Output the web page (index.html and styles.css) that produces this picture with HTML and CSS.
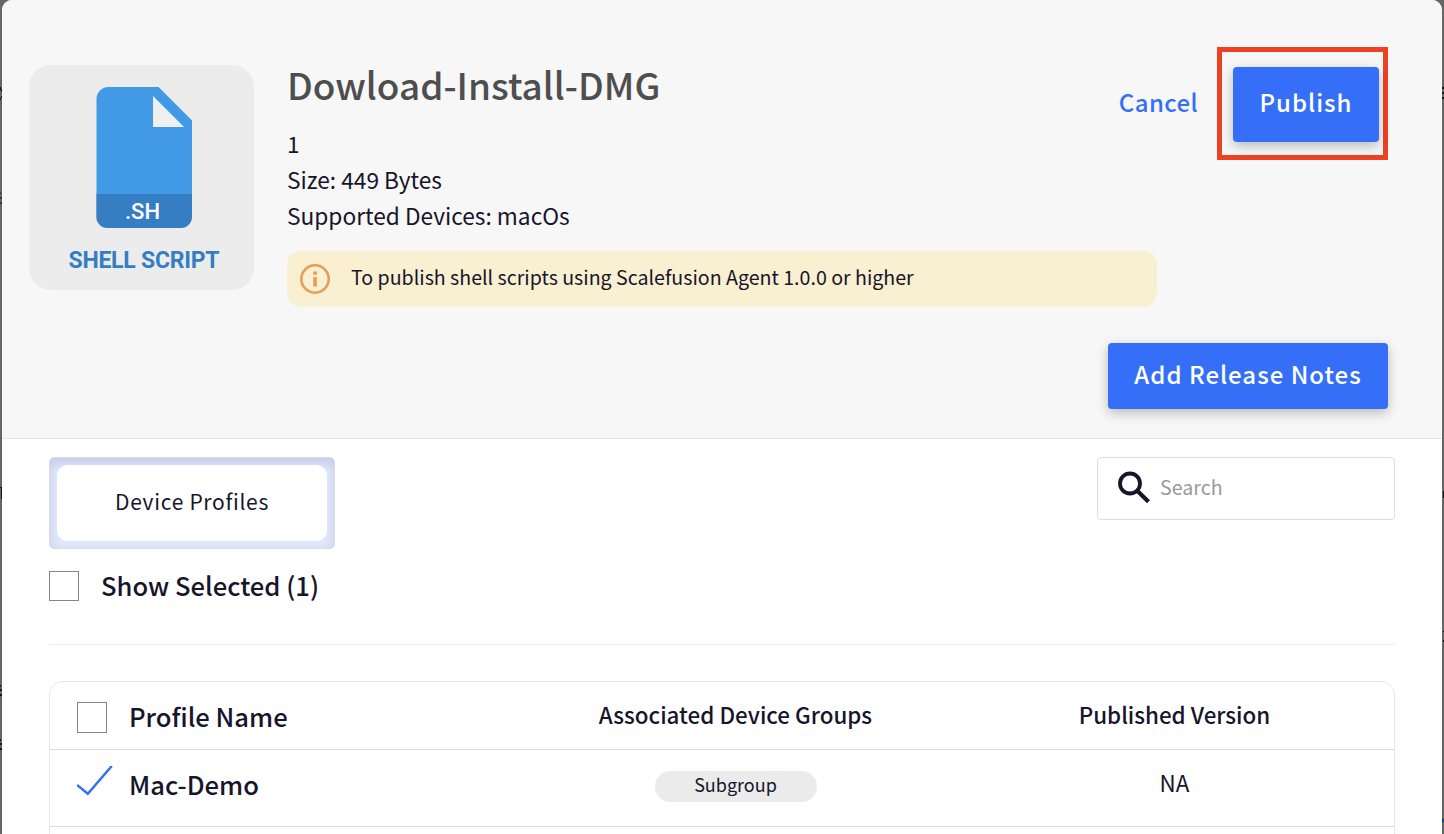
FILE: index.html
```
<!DOCTYPE html>
<html lang="en">
<head>
    <meta charset="UTF-8">
    <meta name="viewport" content="width=device-width, initial-scale=1.0">
    <title>Publish Script</title>
    <link rel="stylesheet" href="styles.css">
</head>
<body>
    <!-- slivers of the dimmed page behind the modal -->
    <svg class="edge" width="2" height="834" viewBox="0 0 2 834">
        <path d="M0 87h1v2h1v3h-1v-2h-1zM0 98h1v-2h1v2h-1v2h-1zM0 487h2v1h-2zM1 488h1v11h-1zM0 685h1v2h-1zM0 689h2v2h-2zM0 694h2v2h-2zM0 739h1v2h-1zM0 743h2v2h-2zM0 748h2v2h-2z" fill="#17152b"/>
        <path d="M0 192h1v2h-1zM0 197h2v2h-2zM0 202h2v2h-2z" fill="#3a3a3a"/>
    </svg>
    <div class="modal">
        <div class="modal-header">
            <div class="script-icon">
                <svg width="225" height="225" viewBox="0 0 225 225">
                    <path d="M79 22H129.500L163 55.500V129H67.500V34A12 12 0 0 1 79 22Z" fill="#4299e5"/>
                    <path d="M124 31V62H155Z" fill="#f0f0f0"/>
                    <path d="M67.300 129H163V152A11 11 0 0 1 152 163H78.300A11 11 0 0 1 67.300 152Z" fill="#357ec3"/>
                    <text class="icon-ext" x="113.500" y="154" text-anchor="middle" textLength="35">.SH</text>
                    <text class="icon-name" x="115" y="202.500" text-anchor="middle" textLength="151">SHELL SCRIPT</text>
                </svg>
            </div>
            <div class="details">
                <h1>Dowload-Install-DMG</h1>
                <p>1</p>
                <p>Size: 449 Bytes</p>
                <p>Supported Devices: macOs</p>
                <div class="notice">
                    <svg width="32" height="32" viewBox="0 0 32 32">
                        <circle cx="16" cy="16" r="13.700" fill="none" stroke="#e59d58" stroke-width="2.600"/>
                        <path d="M14.300 8.500h3.600v3.200h-3.600zM14.300 14h3.600v9.500h-3.600z" fill="#e59d58"/>
                    </svg>
                    <span>To publish shell scripts using Scalefusion Agent 1.0.0 or higher</span>
                </div>
            </div>
            <div class="actions">
                <div class="action-row">
                    <a href="#" class="cancel">Cancel</a>
                    <div class="highlight">
                        <button class="btn btn-publish">Publish</button>
                    </div>
                </div>
                <button class="btn btn-notes">Add Release Notes</button>
            </div>
        </div>
        <div class="modal-body">
            <div class="toolbar">
                <div class="tabs">
                    <div class="tab">Device Profiles</div>
                </div>
                <div class="search">
                    <svg width="34" height="34" viewBox="0 0 34 34">
                        <circle cx="13" cy="13.500" r="10" fill="none" stroke="#17152b" stroke-width="3.800"/>
                        <path d="M20.500 21L31.500 31.800" stroke="#17152b" stroke-width="4.200"/>
                    </svg>
                    <input type="text" placeholder="Search">
                </div>
            </div>
            <label class="show-selected">
                <span class="checkbox"></span>
                <span>Show Selected (1)</span>
            </label>
            <div class="profiles">
                <div class="row row-head">
                    <div class="cell name"><span class="checkbox"></span><span class="label">Profile Name</span></div>
                    <div class="cell">Associated Device Groups</div>
                    <div class="cell version">Published Version</div>
                </div>
                <div class="row">
                    <div class="cell name">
                        <svg class="tick" width="38" height="32" viewBox="0 0 38 32">
                            <path d="M0 19L10.800 27.800L34.800 0" fill="none" stroke="#356ff8" stroke-width="2.500"/>
                        </svg>
                        <span class="label">Mac-Demo</span>
                    </div>
                    <div class="cell"><span class="pill">Subgroup</span></div>
                    <div class="cell na">NA</div>
                </div>
                <div class="row"></div>
            </div>
        </div>
    </div>
    <svg class="edge" width="2" height="834" viewBox="0 0 2 834">
        <path d="M0 87h2v2h-2zM0 92h2v2h-2zM0 97h2v2h-2zM1 491h1v7h-1zM1 631h1v1h-1zM1 640h1v2h-1z" fill="#111111"/>
        <path d="M0 818h1v1h1v3h-1v1h-1z" fill="#1c3f9c"/>
    </svg>
</body>
</html>
```

FILE: styles.css
```
* {
    box-sizing: border-box;
}
body {
    display: flex;
    margin: 0;
    height: 834px;
    overflow: hidden;
    background: #666666;
    color: #17152b;
    font-family: "Noto Sans CJK SC", "Noto Sans", sans-serif;
}
.edge {
    flex: none;
}
.modal {
    width: 1440px;
    height: 834px;
    overflow: hidden;
    background: #ffffff;
    border-radius: 10px 10px 0 0;
}
.modal-header {
    display: flex;
    height: 439px;
    padding: 47px 54px 0 27px;
    background: #f7f7f7;
    border-bottom: 1px solid #e4e4e4;
}
.script-icon {
    width: 225px;
    height: 225px;
    margin-top: 18px;
    border-radius: 22px;
    background: #ececec;
}
.script-icon svg {
    display: block;
}
.icon-ext {
    font-family: Roboto, sans-serif;
    font-size: 22px;
    font-weight: 500;
    fill: #ffffff;
}
.icon-name {
    font-family: Roboto, sans-serif;
    font-size: 23px;
    font-weight: 700;
    fill: #357ec3;
}
.details {
    width: 870px;
    margin-left: 33px;
}
h1 {
    margin: 11px 0 16px;
    font-size: 36.9px;
    line-height: 52px;
    font-weight: 500;
    color: #4e4e4e;
}
p {
    margin: 0;
    font-size: 22.7px;
    line-height: 36px;
}
.notice {
    display: flex;
    align-items: center;
    height: 56px;
    margin-top: 17px;
    padding-left: 12px;
    border-radius: 14px;
    background: #f9efd1;
    font-size: 19.6px;
}
.notice span {
    margin: -6px 0 0 20px;
}
.actions {
    flex: 1;
    display: flex;
    flex-direction: column;
    align-items: flex-end;
    margin-left: -60px;
}
.action-row {
    display: flex;
}
.cancel {
    margin: 42px 19px 0 0;
    color: #356ff8;
    font-size: 24px;
    line-height: 25px;
    font-weight: 500;
    letter-spacing: 0.4px;
    text-decoration: none;
}
.highlight {
    width: 171px;
    height: 113px;
    padding: 15px 0 0 11px;
    border: 5px solid #ee4023;
}
.btn {
    display: block;
    padding: 0 0 5px;
    border: none;
    border-radius: 4px;
    background: #356ff8;
    box-shadow: 0 4px 12px rgba(0, 0, 0, 0.25);
    color: #ffffff;
    font-family: inherit;
    font-size: 24px;
    font-weight: 500;
    letter-spacing: 1px;
    white-space: nowrap;
}
.btn-publish {
    width: 146px;
    height: 75px;
    padding-bottom: 7px;
}
.btn-notes {
    width: 280px;
    height: 66px;
    margin-top: 183px;
}
.modal-body {
    padding: 18px 47px 0;
}
.toolbar {
    display: flex;
    justify-content: space-between;
    align-items: flex-start;
}
.tabs {
    width: 286px;
    height: 92px;
    padding: 7px;
    border: 1px solid #dcdce0;
    border-radius: 5px;
    background: #e0e7fb;
    box-shadow: inset 0 5px 10px rgba(60, 80, 150, 0.18);
}
.tab {
    height: 76px;
    border-radius: 11px;
    background: #ffffff;
    font-size: 21px;
    line-height: 73px;
    letter-spacing: 0.7px;
    text-align: center;
}
.search {
    display: flex;
    width: 298px;
    height: 63px;
    padding: 12px 0 0 19px;
    border: 1px solid #dddddd;
    border-radius: 4px;
}
.search input {
    width: 200px;
    height: 34px;
    margin: -1px 0 0 9px;
    padding: 0;
    border: none;
    outline: none;
    font-family: inherit;
    font-size: 19.6px;
}
.search input::placeholder {
    color: #999999;
}
.checkbox {
    flex: none;
    width: 30px;
    height: 30px;
    border: 1px solid #858585;
    background: #ffffff;
}
.show-selected {
    display: flex;
    gap: 22px;
    height: 96px;
    padding-top: 22px;
    border-bottom: 1px solid #ececec;
    font-size: 25.6px;
    line-height: 28px;
    font-weight: 500;
}
.profiles {
    height: 170px;
    margin-top: 36px;
    border: 1px solid #e2e7f8;
    border-radius: 14px 14px 0 0;
}
.row {
    display: grid;
    grid-template-columns: 466px 439px 439px;
    height: 77px;
    border-bottom: 1px solid #dddddd;
}
.row-head {
    height: 68px;
    font-weight: 500;
}
.cell {
    font-size: 22.4px;
    line-height: 64px;
    text-align: center;
}
.name {
    display: flex;
    padding-left: 27px;
    font-size: 25.6px;
    font-weight: 500;
    line-height: 68px;
}
.name .checkbox {
    height: 31px;
    margin: 20px 22px 0 0;
}
.tick {
    flex: none;
    margin: 16px 14px 0 0;
}
.pill {
    display: inline-block;
    width: 162px;
    height: 31px;
    margin-top: 21px;
    border-radius: 16px;
    background: #ebebeb;
    font-size: 18px;
    line-height: 26px;
    vertical-align: top;
}
```
